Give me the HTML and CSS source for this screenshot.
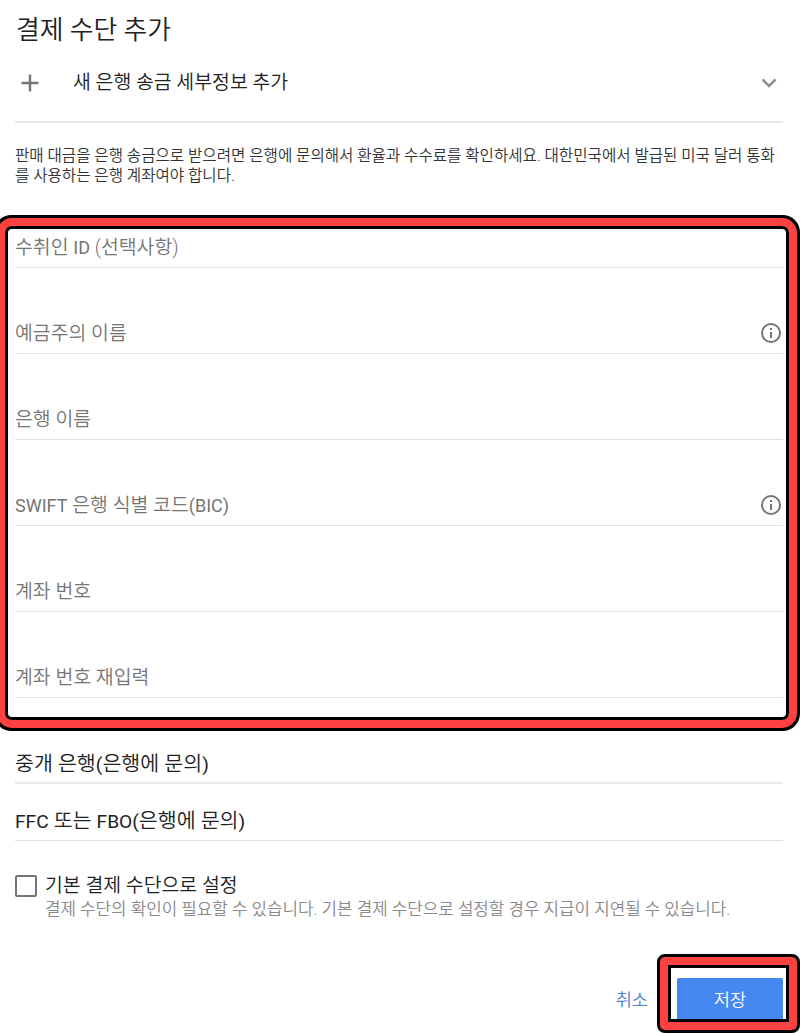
FILE: index.html
```
<!DOCTYPE html>
<html lang="ko">
<head>
    <meta charset="UTF-8">
    <meta name="viewport" content="width=device-width, initial-scale=1.0">
    <title>결제 수단 추가</title>
    <link rel="stylesheet" href="styles.css">
</head>
<body>
    <main class="payment">
        <h1>결제 수단 추가</h1>

        <div class="method">
            <svg class="plus" viewBox="0 0 18 18"><path d="M9 0.5v17M0.5 9h17"/></svg>
            <span class="method-name">새 은행 송금 세부정보 추가</span>
            <svg class="chevron" viewBox="0 0 16 10"><path d="M1.5 1.5L8 8l6.5-6.5"/></svg>
        </div>

        <p class="notice">판매 대금을 은행 송금으로 받으려면 은행에 문의해서 환율과 수수료를 확인하세요. 대한민국에서 발급된 미국 달러 통화<br>를 사용하는 은행 계좌여야 합니다.</p>

        <section class="fields">
            <div class="field"><label>수취인 <span class="latin">ID</span> (선택사항)</label></div>
            <div class="field">
                <label>예금주의 이름</label>
                <svg class="info" viewBox="0 0 20 20"><circle cx="10" cy="10" r="9"/><path d="M10 9v6M10 5v2"/></svg>
            </div>
            <div class="field"><label>은행 이름</label></div>
            <div class="field">
                <label><span class="latin">SWIFT</span> 은행 식별 코드<span class="latin">(BIC)</span></label>
                <svg class="info" viewBox="0 0 20 20"><circle cx="10" cy="10" r="9"/><path d="M10 9v6M10 5v2"/></svg>
            </div>
            <div class="field"><label>계좌 번호</label></div>
            <div class="field"><label>계좌 번호 재입력</label></div>
            <div class="fields-mark"></div>
        </section>

        <div class="extra extra-first">중개 은행<span class="latin">(</span>은행에 문의<span class="latin">)</span></div>
        <div class="extra"><span class="latin">FFC</span> 또는 <span class="latin">FBO(</span>은행에 문의<span class="latin">)</span></div>

        <div class="default">
            <span class="checkbox"></span>
            <div>
                <div class="default-title">기본 결제 수단으로 설정</div>
                <div class="default-hint">결제 수단의 확인이 필요할 수 있습니다. 기본 결제 수단으로 설정할 경우 지급이 지연될 수 있습니다.</div>
            </div>
        </div>

        <div class="actions">
            <button class="cancel">취소</button>
            <div class="save-wrap">
                <button class="save">저장</button>
                <div class="save-mark"></div>
            </div>
        </div>
    </main>
</body>
</html>
```

FILE: styles.css
```
* {
    box-sizing: border-box;
}

body {
    margin: 0;
    background: #fff;
    color: #212121;
    font-family: Roboto, "Noto Sans CJK KR", sans-serif;
}

.payment {
    height: 1033px;
    padding: 10px 17px 0 15px;
    overflow: hidden;
    white-space: nowrap;
}

h1 {
    margin: 0;
    height: 38px;
    padding-left: 1px;
    line-height: 40px;
    font-size: 25.8px;
    font-weight: 350;
}

.latin {
    font-size: 0.93em;
    font-weight: 400;
}

.method {
    display: flex;
    align-items: center;
    height: 75px;
    padding: 0 6px 4px 5px;
    border-bottom: 2px solid #e9e9e9;
}

svg {
    fill: none;
    stroke: #757575;
    stroke-width: 2;
    flex: none;
}

.plus {
    width: 18px;
    height: 18px;
    margin-left: 1px;
    stroke-width: 2.4;
}

.method-name {
    flex: 1;
    margin: -5px 0 0 34px;
    font-size: 19.4px;
    font-weight: 350;
}

.chevron {
    width: 16px;
    height: 10px;
    stroke: #919191;
    stroke-width: 2.5;
}

.notice {
    margin: 23px 0 0;
    color: #333;
    font-size: 15.6px;
    font-weight: 350;
    line-height: 20px;
}

/* Поля формы */
.fields {
    position: relative;
    margin-top: 40px;
}

.field {
    display: flex;
    align-items: flex-end;
    justify-content: space-between;
    height: 86px;
    padding-bottom: 4px;
    border-bottom: 1px solid #e0e0e0;
    color: #757575;
    font-size: 19.4px;
    font-weight: 350;
    line-height: 30px;
}

.field:first-child {
    height: 42px;
}

.info {
    width: 20px;
    height: 20px;
    margin: 0 2px 6px 0;
}

/* Красная рамка вокруг полей */
.fields-mark {
    position: absolute;
    top: 0;
    left: -10px;
    right: -6px;
    height: 494px;
    border: 3px solid #000;
    border-radius: 7px;
    box-shadow: 0 0 0 8px #ff4141, 0 0 0 11px #000;
}

.extra {
    height: 57px;
    padding-top: 22px;
    border-bottom: 1px solid #e0e0e0;
    font-size: 20.6px;
    font-weight: 350;
    line-height: 30px;
}

.extra-first {
    height: 86px;
    padding-top: 51px;
    border-bottom: 2px solid #e9e9e9;
}

.default {
    display: flex;
    gap: 8px;
    margin-top: 30px;
}

.checkbox {
    width: 22px;
    height: 22px;
    margin-top: 4px;
    border: 2px solid #757575;
    border-radius: 2px;
}

.default-title {
    height: 26px;
    font-size: 19.4px;
    font-weight: 350;
    line-height: 30px;
}

.default-hint {
    color: #8a8a8a;
    font-size: 16.85px;
    font-weight: 350;
    line-height: 24px;
}

.actions {
    display: flex;
    justify-content: flex-end;
    align-items: flex-start;
    margin-top: 57px;
}

button {
    height: 43px;
    padding: 0;
    border: none;
    background: none;
    font-family: inherit;
    font-size: 17.6px;
    font-weight: 350;
    line-height: 42px;
}

.cancel {
    margin-right: 29px;
    color: #4a80d4;
}

.save-wrap {
    position: relative;
}

.save {
    display: block;
    width: 106px;
    border-radius: 2px;
    background: #4688f1;
    color: #fff;
}

.save-mark {
    position: absolute;
    top: -24px;
    left: -20px;
    width: 143px;
    height: 79px;
    border: 3px solid #000;
    border-radius: 8px;
    box-shadow: inset 0 0 0 8px #ff4141, inset 0 0 0 11px #000;
}
```
